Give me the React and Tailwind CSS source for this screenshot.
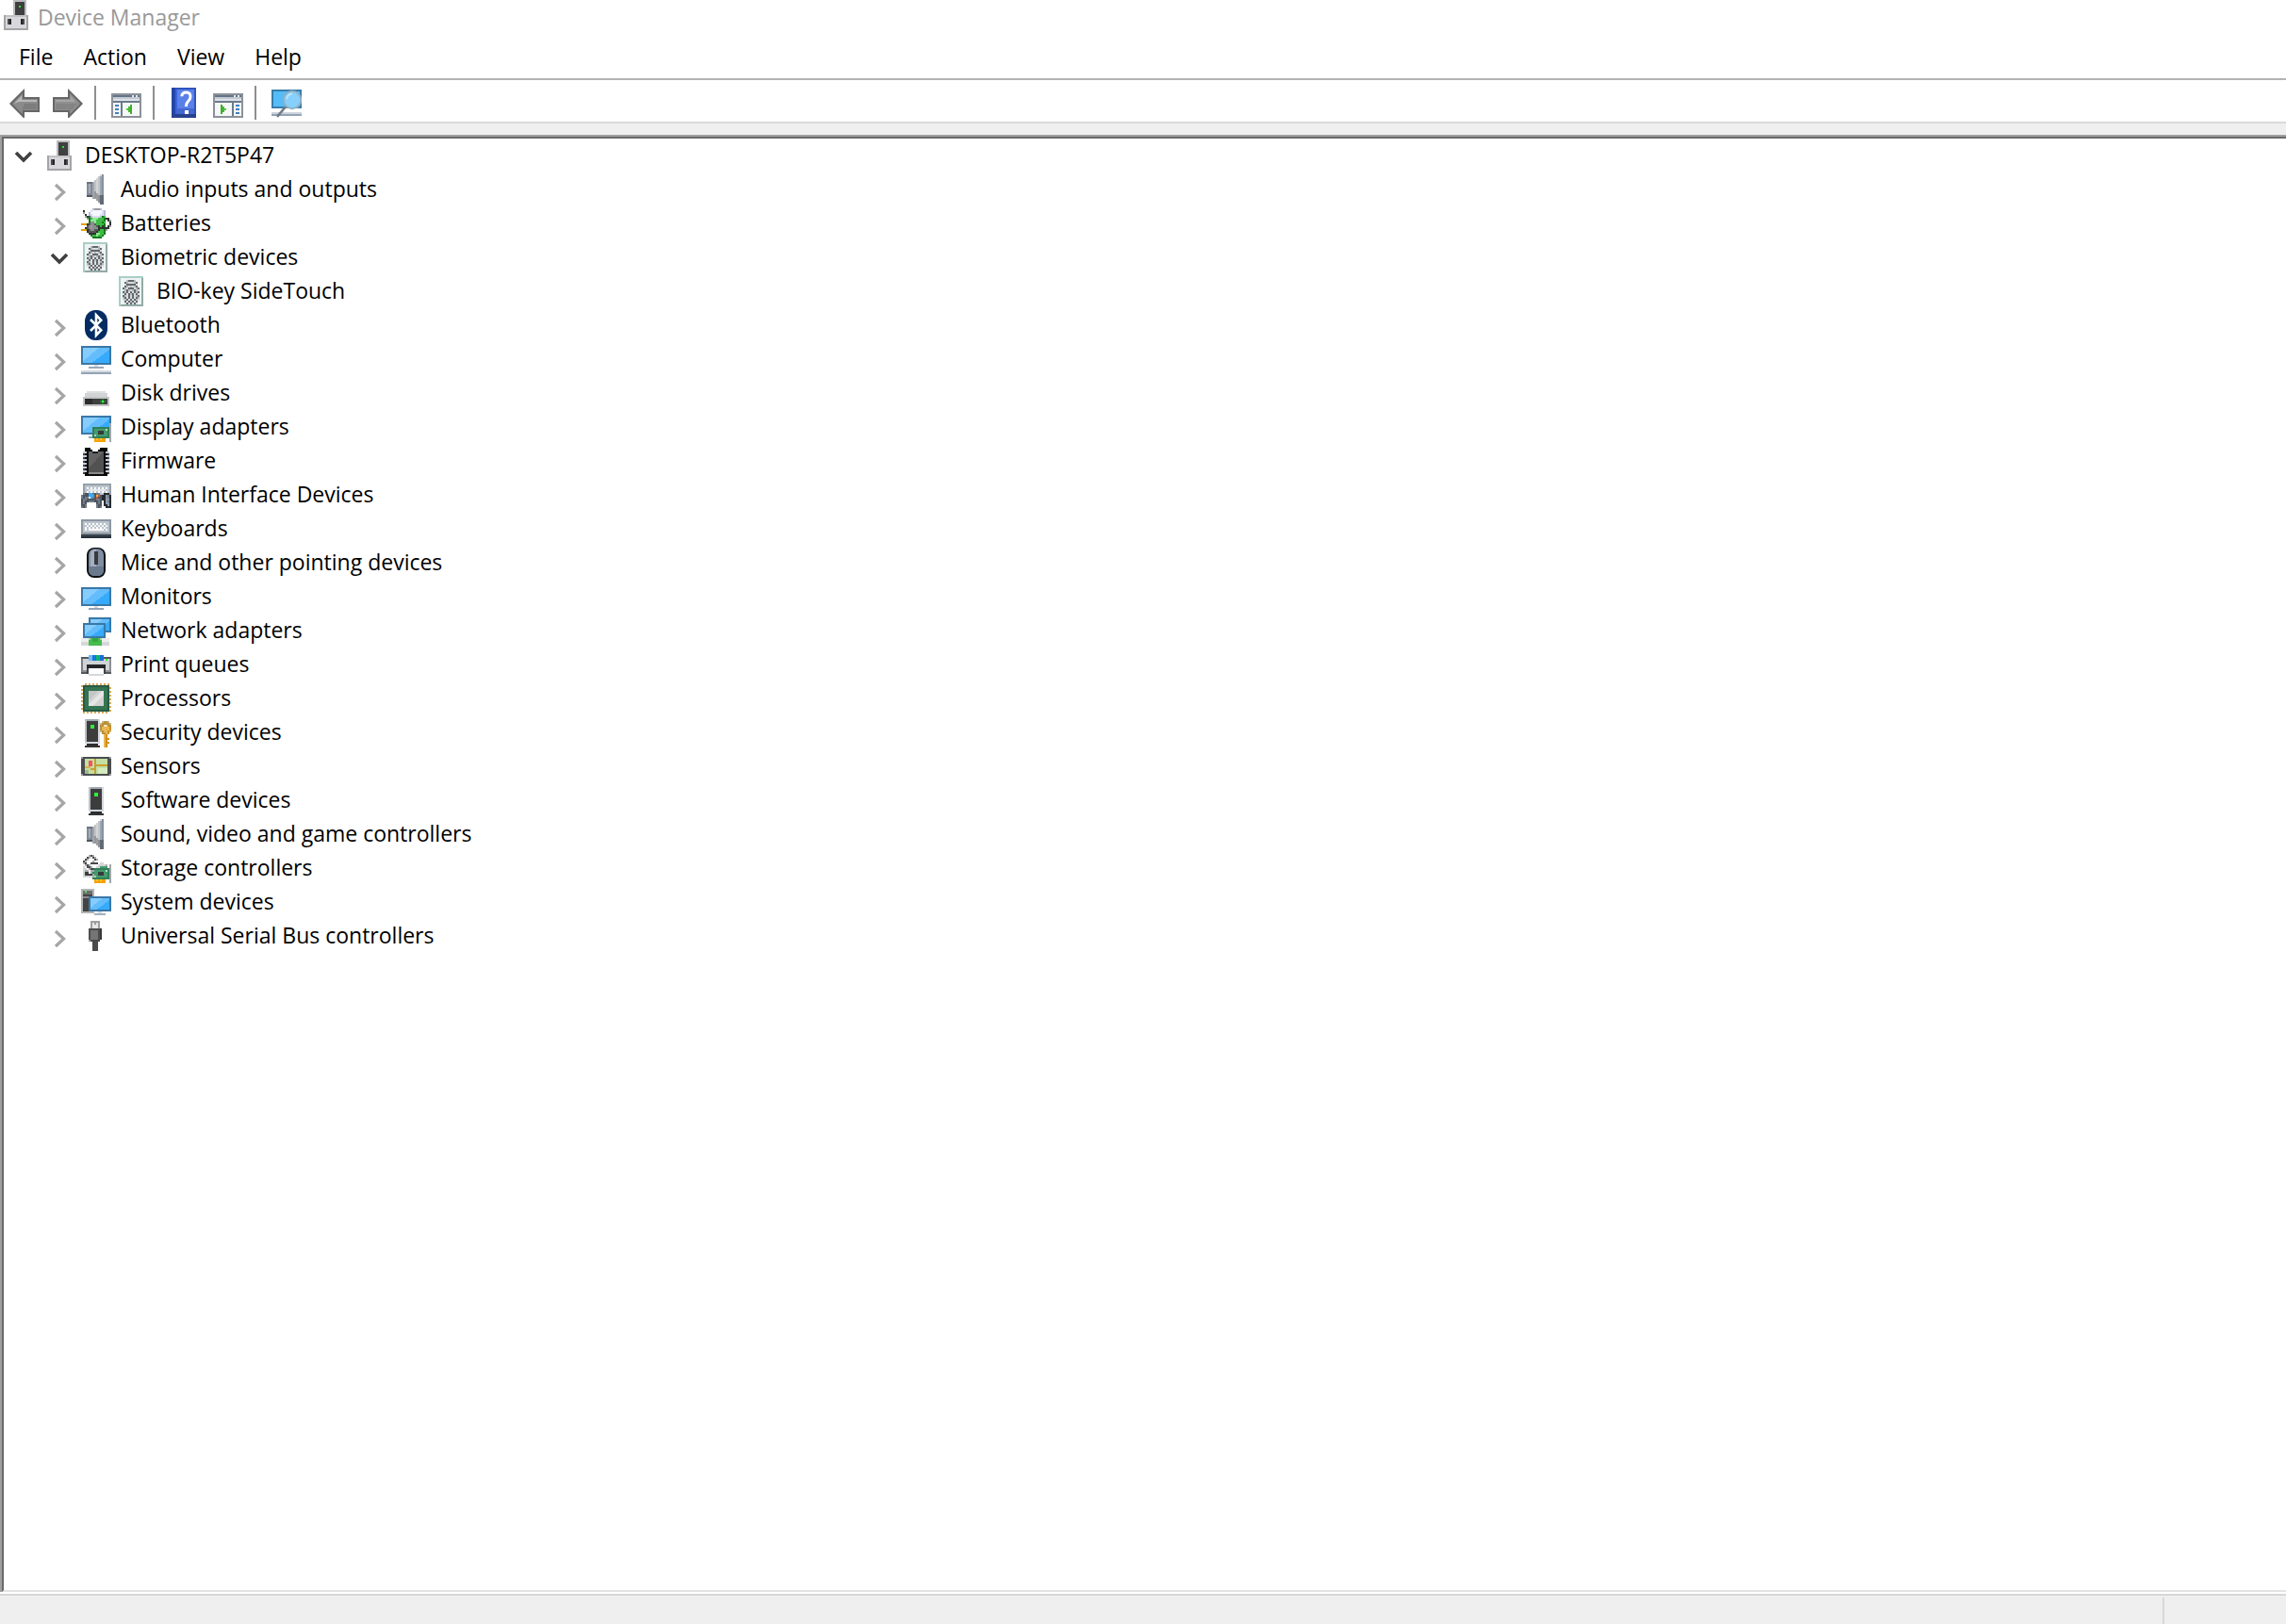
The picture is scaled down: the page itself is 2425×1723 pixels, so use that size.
import React, { useState } from "react";

/* ---------- drawing helpers: every icon lives on a 16 x 16 grid ---------- */

function Icon({ children, label }) {
  return (
    <svg
      viewBox="0 0 16 16"
      shapeRendering="crispEdges"
      className="size-8 shrink-0"
      role={label ? "img" : undefined}
      aria-label={label}
      aria-hidden={label ? undefined : true}
    >
      {children}
    </svg>
  );
}

const R = ({ x, y, w = 1, h = 1, c }) => <rect x={x} y={y} width={w} height={h} fill={c} />;

/* Paints rows of palette letters; neighbouring equal cells become one rect. */
function Pixels({ rows, colors, x = 0, y = 0 }) {
  const out = [];
  rows.forEach((row, j) => {
    let i = 0;
    while (i < row.length) {
      let n = 1;
      while (row[i + n] === row[i]) n++;
      if (colors[row[i]]) out.push(<R key={`${i}-${j}`} x={x + i} y={y + j} w={n} c={colors[row[i]]} />);
      i += n;
    }
  });
  return <>{out}</>;
}

function Screen({ x = 0, y, w = 16, h = 10 }) {
  const r = x + w - 1;
  const b = y + h - 1;
  return (
    <>
      <R x={x} y={y} w={w} h={h} c="#3a78a6" />
      <R x={x + 1} y={y + 1} w={w - 2} h={h - 2} c="#63bdfd" />
      <path d={`M${x + 1} ${y + 1}H${x + w * 0.6}L${x + 1} ${b - 1}Z`} fill="#86cdfd" />
      <path d={`M${r} ${y + 2}V${b}H${x + w * 0.35}Z`} fill="#36abfd" />
    </>
  );
}

function Tower({ x }) {
  return (
    <>
      <R x={x} y={1} w={8} h={13} c="#d3d8de" />
      <R x={x} y={1} w={7} h={1} c="#a3a9b0" />
      <R x={x} y={1} w={1} h={12} c="#bcc1c7" />
      <R x={x + 1} y={2} w={6} h={11} c="#3d3d3d" />
      <R x={x + 3} y={4} w={2} h={2} c="#2df03a" />
      <R x={x + 1} y={14} w={6} h={1} c="#2c2c2c" />
      <R x={x} y={15} w={8} h={1} c="#333333" />
    </>
  );
}

function Card({ y }) {
  return (
    <>
      <R x={15} y={y - 2} w={1} h={10} c="#a3a6aa" />
      <R x={6} y={y} w={9} h={6} c="#2f8058" />
      <R x={7} y={y + 1} w={7} h={4} c="#46996f" />
      <R x={9} y={y + 2} w={3} h={2} c="#333b38" />
      <R x={13} y={y + 1} w={1} h={1} c="#b5dcc6" />
      <R x={7} y={y + 4} w={1} h={1} c="#a5d4b9" />
      <R x={7} y={y + 6} w={6} h={2} c="#f5a300" />
      <R x={8} y={y + 6} w={1} h={1} c="#ffc03a" />
      <R x={10} y={y + 6} w={1} h={1} c="#ffc03a" />
    </>
  );
}

/* ------------------------------- icons ---------------------------------- */

const MachineIcon = () => (
  <Icon>
    <R x={6} y={0} w={7} h={8} c="#b9bcbf" />
    <R x={7} y={1} w={5} h={7} c="#3f3f3f" />
    <R x={9} y={3} c="#2de03a" />
    <R x={1} y={8} w={13} h={8} c="#a5a5a8" />
    <R x={2} y={8} w={11} h={1} c="#c3c3c6" />
    <R x={2} y={9} w={11} h={6} c="#d8d8dc" />
    <R x={3} y={10} w={2} h={3} c="#4a4a4a" />
    <R x={4} y={10} w={1} h={3} c="#262626" />
    <R x={10} y={10} w={2} h={3} c="#4a4a4a" />
    <R x={10} y={10} w={1} h={3} c="#262626" />
  </Icon>
);

const SpeakerIcon = () => (
  <Icon>
    <R x={3} y={4} w={3} h={8} c="#828b97" />
    <R x={3} y={4} w={3} h={1} c="#6b7480" />
    <R x={4} y={5} w={1} h={5} c="#a4acb6" />
    <R x={3} y={11} w={3} h={1} c="#4d5560" />
    <R x={6} y={4} w={1} h={9} c="#a3a6ab" />
    <R x={7} y={3} w={1} h={10} c="#c0c2c5" />
    <R x={8} y={2} w={1} h={12} c="#d3d4d6" />
    <R x={9} y={1} w={1} h={14} c="#c3c5c8" />
    <R x={7} y={9} w={1} h={4} c="#96989c" />
    <R x={8} y={10} w={1} h={4} c="#9c9ea2" />
    <R x={9} y={11} w={1} h={4} c="#8e9196" />
    <R x={10} y={0} w={1} h={16} c="#9ba6b2" />
    <R x={11} y={0} w={1} h={16} c="#8591a0" />
    <R x={10} y={11} w={2} h={5} c="#626a75" />
    <R x={10} y={0} w={1} h={1} c="#d5d9de" />
  </Icon>
);

const BatteryIcon = () => (
  <Icon>
    <Pixels
      colors={{ k: "#2f3330", d: "#555757", m: "#8b8d8d", w: "#f6f6fd", l: "#b9b9dc", L: "#dcdcf2", g: "#3dbb45", b: "#8fe694", G: "#137a1b", y: "#dfa300", n: "#9a9c9c" }}
      rows={[
        "......lnnnl.....",
        ".k...LwwwwwLl...",
        ".n..lwwwwwwLl...",
        "..k.lLwwwwLLl...",
        "..nkGlLLLLlGg...",
        "...nGgbbbgggGkk.",
        "....GbbbggggG.kn",
        "....GmmbgggGg..k",
        "yyykdmmdggggG..k",
        "...dmnmmdkgkG.kn",
        "..kdmnmmmkkkkkk.",
        "yyykdmmddkggGn..",
        "...kddddkgggG...",
        "....kkkkbbggG...",
        ".....GggbggG....",
        "......GGGGG.....",
      ]}
    />
  </Icon>
);

const FingerprintIcon = () => (
  <Icon>
    <R x={1} y={0} w={13} h={16} c="#a9cfc7" />
    <R x={13} y={1} w={1} h={15} c="#93aaa5" />
    <R x={2} y={15} w={12} h={1} c="#93aaa5" />
    <R x={2} y={1} w={11} h={14} c="#f0f3f3" />
    <Pixels
      x={3}
      y={2}
      colors={{ k: "#62696e", n: "#b4babc", l: "#d9dcdd" }}
      rows={[
        "..nkkkn..",
        ".knlllnk.",
        ".lkkkkkl.",
        ".knlnlnk.",
        "knlkkklnk",
        "lnknlnknl",
        "knklklknk",
        "lklknklkl",
        "knlklklnk",
        "nklklklkn",
        "lnklklknl",
        ".klknklk.",
        ".lklklkl.",
      ]}
    />
  </Icon>
);

const BluetoothIcon = () => (
  <Icon>
    <g shapeRendering="auto">
      <rect x="2" y="0" width="12" height="16" rx="5.5" ry="6" fill="#042c63" />
      <path d="M5 5L10.6 10.6L8 13.4V2.6L10.6 5.4L5 11" fill="none" stroke="#ffffff" strokeWidth="1.3" />
    </g>
  </Icon>
);

const ComputerIcon = () => (
  <Icon>
    <Screen y={1} />
    <R x={7} y={11} w={2} c="#d5dae0" />
    <R x={4} y={12} w={8} c="#9aa8ba" />
    <R x={0} y={14} w={16} c="#d3d8df" />
    <R x={0} y={15} w={16} c="#94a3b5" />
  </Icon>
);

const DiskIcon = () => (
  <Icon>
    <R x={3} y={7} w={10} c="#dedfe1" />
    <R x={2} y={8} w={12} h={2} c="#d3d4d6" />
    <R x={1} y={10} w={14} h={5} c="#c3c4c6" />
    <R x={2} y={11} w={12} h={3} c="#3f3f3f" />
    <R x={2} y={11} w={4} h={3} c="#2c2c2c" />
    <R x={10} y={12} w={3} c="#1f7a28" />
    <R x={11} y={11} w={1} h={3} c="#1f7a28" />
    <R x={11} y={12} c="#46f254" />
  </Icon>
);

const DisplayIcon = () => (
  <Icon>
    <Screen y={2} h={10} />
    <R x={4} y={13} w={3} c="#94a3b5" />
    <Card y={8} />
  </Icon>
);

const FirmwareIcon = () => (
  <Icon>
    <R x={2} y={1} w={12} h={15} c="#0a0a0a" />
    <R x={4} y={3} w={8} h={11} c="#525252" />
    <path d="M4 3H12L4 12Z" fill="#636363" />
    <R x={4} y={14} w={8} c="#8a8a8a" />
    <R x={5} y={1} w={5} c="#ffffff" />
    <R x={6} y={2} w={3} c="#ffffff" />
    <R x={5} y={2} c="#0a0a0a" />
    <R x={9} y={2} w={2} c="#0a0a0a" />
    <R x={6} y={3} w={3} c="#1c1c1c" />
    {[3, 5, 7, 9, 11, 13].map((y) => (
      <React.Fragment key={y}>
        <R x={1} y={y} w={2} c="#c5cdd8" />
        <R x={13} y={y} w={2} c="#c5cdd8" />
        <R x={1} y={y + 1} c="#43484f" />
        <R x={14} y={y + 1} c="#43484f" />
      </React.Fragment>
    ))}
  </Icon>
);

const HidIcon = () => (
  <Icon>
    <R x={1} y={2} w={15} h={9} c="#98a1ab" />
    <R x={2} y={3} w={13} h={7} c="#bcc4cd" />
    {[3, 5, 7, 9, 11, 13].map((x) => (
      <React.Fragment key={x}>
        <R x={x} y={4} c="#ffffff" />
        <R x={x} y={6} c="#ffffff" />
      </React.Fragment>
    ))}
    <R x={4} y={5} w={9} c="#e4e8ec" />
    <Pixels
      y={7}
      colors={{ d: "#4d565f", m: "#717c88", b: "#35aefc", r: "#e0503c", o: "#f2b233", k: "#262b31", s: "#8d9aab", w: "#ffffff" }}
      rows={[
        ".mddbbmdmm..kkk.",
        "mdddbbbdordkksmk",
        "mdmmwbmdrddkksmk",
        "dmmdddddmmdkkssk",
        "dmddmmmddmdwksmk",
        "dmdwwwwwdmdwkssk",
        "ddmwwwwwmddwkksk",
        "mdmwwwwwmdmwwkkk",
      ]}
    />
  </Icon>
);

const KeyboardIcon = () => (
  <Icon>
    <R x={0} y={3} w={16} h={8} c="#8d97a2" />
    <R x={1} y={4} w={14} h={6} c="#bbc3cb" />
    {[2, 4, 6, 8, 10, 12].map((x) => (
      <React.Fragment key={x}>
        <R x={x} y={5} c="#ffffff" />
        <R x={x + 1} y={6} c="#f2f4f6" />
        <R x={x} y={7} c="#ffffff" />
      </React.Fragment>
    ))}
    <R x={2} y={8} c="#ffffff" />
    <R x={4} y={8} w={8} c="#f7f8f9" />
    <R x={13} y={8} c="#ffffff" />
    <R x={0} y={11} w={16} h={2} c="#27313b" />
    <R x={0} y={11} w={16} h={1} c="#37424d" />
  </Icon>
);

const MouseIcon = () => (
  <Icon>
    <g shapeRendering="auto">
      <rect x="3" y="0" width="10" height="16" rx="4" fill="#0d0f12" />
      <rect x="4" y="0.6" width="8" height="14.4" rx="3.2" fill="#7f8ea2" />
      <path d="M5 3Q5 1 8 1V14Q5 14 5 11Z" fill="#a3b0c1" />
      <path d="M4 10H12V12Q12 15 8 15Q4 15 4 12Z" fill="#6b798c" />
    </g>
    <R x={7} y={2} w={2} h={7} c="#3a3a3c" />
  </Icon>
);

const MonitorIcon = () => (
  <Icon>
    <Screen y={3} />
    <R x={7} y={13} w={2} c="#d5dae0" />
    <R x={4} y={14} w={8} c="#94a3b5" />
  </Icon>
);

const NetworkIcon = () => (
  <Icon>
    <Screen x={4} y={1} w={12} h={8} />
    <Screen x={1} y={4} w={12} h={8} />
    <R x={0} y={12} w={15} h={4} c="#d6d7d8" />
    <R x={0} y={13} w={15} h={1} c="#eeeeee" />
    <R x={0} y={12} w={15} h={1} c="#ececec" />
    <R x={4} y={12} w={7} h={4} c="#46bc4e" />
    <R x={4} y={12} w={1} h={1} c="#a8d8ab" />
    <R x={10} y={12} w={1} h={1} c="#a8d8ab" />
    <R x={6} y={12} w={3} h={2} c="#35a83e" />
  </Icon>
);

const PrinterIcon = () => (
  <Icon>
    <R x={0} y={4} w={16} h={9} c="#8d9196" />
    <R x={0} y={4} w={4} c="#55585c" />
    <R x={12} y={4} w={4} c="#55585c" />
    <R x={1} y={5} w={14} h={6} c="#d0d3d6" />
    <R x={0} y={5} w={1} h={7} c="#7b7f85" />
    <R x={4} y={3} w={2} h={3} c="#72b8f5" />
    <R x={6} y={3} w={2} h={3} c="#1478dc" />
    <R x={8} y={3} w={2} h={3} c="#10b46c" />
    <R x={10} y={3} w={2} h={3} c="#1a6fd8" />
    <R x={13} y={5} c="#2cf02c" />
    <R x={3} y={8} w={10} h={2} c="#25282b" />
    <R x={3} y={10} w={10} h={3} c="#3f4347" />
    <R x={0} y={12} w={3} c="#55585c" />
    <R x={13} y={12} w={3} c="#55585c" />
    <R x={4} y={10} w={8} h={4} c="#ffffff" />
    <R x={4} y={13} w={8} c="#d6d8da" />
  </Icon>
);

const ProcessorIcon = () => (
  <Icon>
    {[0, 2, 4, 6, 8, 10, 12, 14].map((n) => (
      <React.Fragment key={n}>
        <R x={n} y={0} c={n ? "#d9a95a" : "none"} />
        <R x={n + 1} y={15} c={n < 14 ? "#d9a95a" : "none"} />
        <R x={0} y={n + 1} c={n < 14 ? "#d9a95a" : "none"} />
        <R x={15} y={n} c={n ? "#d9a95a" : "none"} />
      </React.Fragment>
    ))}
    <R x={1} y={1} w={14} h={14} c="#285a41" />
    <R x={2} y={2} w={12} h={12} c="#347452" />
    <R x={4} y={4} w={8} h={8} c="#d3d3d3" />
    <path d="M4 4H9L4 9Z" fill="#c5c5c5" />
    <path d="M11 4H12V6L6 12H4V11Z" fill="#e6e6e6" />
  </Icon>
);

const SecurityIcon = () => (
  <Icon>
    <Tower x={2} />
    <Pixels
      x={10}
      y={2}
      colors={{ n: "#c9b98a", a: "#b8923c", y: "#e8b653", o: "#d08f1c", w: "#f4e3b8" }}
      rows={[".naan.", "naaaan", "aawwaa", "ayyyyo", "ayyyyo", "nayyon", ".aayo.", "..yo..", "..yo..", "..yoo.", "..yo..", "..yoo.", "..yo..", "..yo.."]}
    />
  </Icon>
);

const SensorIcon = () => (
  <Icon>
    <R x={0} y={3} w={16} h={10} c="#4b4d4f" />
    <R x={0} y={3} c="#9a9a9a" />
    <R x={15} y={3} c="#9a9a9a" />
    <R x={0} y={12} c="#9a9a9a" />
    <R x={15} y={12} c="#9a9a9a" />
    <R x={2} y={4} w={12} h={8} c="#c3dfa2" />
    <R x={9} y={9} w={5} h={3} c="#d5ebc0" />
    <R x={2} y={10} w={2} h={2} c="#9fb78c" />
    <R x={7} y={4} w={1} h={8} c="#c89f30" />
    <R x={2} y={8} w={3} c="#d9b354" />
    <R x={5} y={9} w={2} c="#c89f30" />
    <R x={8} y={7} w={6} c="#c89f30" />
    <R x={4} y={5} w={2} h={3} c="#f2555f" />
  </Icon>
);

const SoftwareIcon = () => (
  <Icon>
    <Tower x={4} />
  </Icon>
);

const StorageIcon = () => (
  <Icon>
    <Card y={8} />
    <Pixels
      y={1}
      colors={{ k: "#4a4a4a", d: "#3a3f3d", n: "#a9acaf", l: "#d3d5d7", g: "#4c9a70" }}
      rows={[
        "....nkn.........",
        "...kn.kn........",
        "..kn...kn.......",
        ".kn...n.........",
        ".nk..kkkk.ll....",
        "..nkn....lllln..",
        ".l.kkn..llgggg..",
        ".ll.nkk.........",
        ".lnn.nn.........",
        ".ldd.n..........",
        ".lddddn.........",
        ".llllln.........",
      ]}
    />
  </Icon>
);

const SystemIcon = () => (
  <Icon>
    <R x={0} y={1} w={7} h={13} c="#b4b4b4" />
    <R x={1} y={2} w={5} h={11} c="#444444" />
    <R x={1} y={2} w={5} h={2} c="#6d6d6d" />
    <R x={1} y={5} w={5} h={1} c="#8b8b8b" />
    <R x={2} y={2} c="#3df24a" />
    <Screen x={4} y={5} w={12} h={8} />
    <R x={9} y={13} w={2} c="#d5dae0" />
    <R x={7} y={14} w={6} c="#a3b0c1" />
  </Icon>
);

const UsbIcon = () => (
  <Icon>
    <R x={5} y={0} w={5} h={4} c="#a0a0a0" />
    <R x={6} y={1} w={3} h={3} c="#e6e6e6" />
    <R x={7} y={1} w={1} h={1} c="#9a9a9a" />
    <R x={4} y={4} w={7} h={6} c="#4d4d4d" />
    <R x={5} y={5} w={4} h={5} c="#757575" />
    <R x={4} y={10} c="#a0a0a0" />
    <R x={5} y={10} w={5} h={1} c="#484848" />
    <R x={10} y={4} w={1} h={6} c="#383838" />
    <R x={6} y={11} w={3} h={5} c="#4b4b4b" />
  </Icon>
);

const BackIcon = () => (
  <Icon>
    <g shapeRendering="auto">
      <path d="M0.7 8.5L7.5 1.7V5.5H15.5V12.5H7.5V15.4Z" fill="#8b8b8b" stroke="#666666" />
      <path d="M2.4 8.5L6.6 4.3V6.5H14.5V7.5H5Z" fill="#b9b9b9" />
      <path d="M8 8.5H14.5V11.5H6.5V12.4Z" fill="#777777" opacity="0.7" />
    </g>
  </Icon>
);

const ForwardIcon = () => (
  <Icon>
    <g shapeRendering="auto">
      <path d="M15.3 8.5L8.5 1.7V5.5H0.5V12.5H8.5V15.4Z" fill="#8f8f8f" stroke="#666666" />
      <path d="M1.5 6.5H9.4V4.3L12 7.5H1.5Z" fill="#a5a5a5" />
      <path d="M1.5 8.5H13L9.4 12.5V11.5H1.5Z" fill="#7f7f7f" opacity="0.7" />
    </g>
  </Icon>
);

const WindowFrame = () => (
  <>
    <R x={0} y={3} w={16} h={13} c="#8d9299" />
    <R x={1} y={4} w={14} h={1} c="#657488" />
    <R x={1} y={5} w={14} h={3} c="#dfe3e8" />
    <R x={1} y={5} w={14} h={1} c="#c3cad3" />
    <R x={1} y={7} w={14} h={1} c="#6c7a8d" />
    <R x={11} y={4} c="#e6eaef" />
    <R x={13} y={4} c="#e6eaef" />
    <R x={1} y={8} w={14} h={7} c="#f6f7f7" />
  </>
);

const ConsoleTreeIcon = () => (
  <Icon>
    <WindowFrame />
    {[9, 11, 13].map((y) => (
      <R key={y} x={2} y={y} w={2} c="#4180c2" />
    ))}
    <R x={5} y={8} w={1} h={7} c="#6c7a8d" />
    <R x={8} y={11} c="#5bc94a" />
    <R x={9} y={10} h={3} c="#48b838" />
    <R x={10} y={9} h={5} c="#3fae2e" />
  </Icon>
);

const ActionPaneIcon = () => (
  <Icon>
    <WindowFrame />
    {[9, 11, 13].map((y) => (
      <R key={y} x={12} y={y} w={2} c="#4180c2" />
    ))}
    <R x={10} y={8} w={1} h={7} c="#6c7a8d" />
    <R x={4} y={9} h={5} c="#3fae2e" />
    <R x={5} y={10} h={3} c="#48b838" />
    <R x={6} y={11} c="#5bc94a" />
  </Icon>
);

const HelpIcon = () => (
  <Icon>
    <R x={1} y={0} w={13} h={16} c="#2f54bd" />
    <R x={1} y={0} w={2} h={16} c="#2346a8" />
    <R x={3} y={1} w={1} h={14} c="#3c63d6" />
    <R x={4} y={1} w={9} h={13} c="#5a80ea" />
    <R x={4} y={11} w={9} h={3} c="#4468cf" />
    <R x={1} y={14} w={13} h={2} c="#28428f" />
    <g shapeRendering="auto">
      <path d="M6.4 4.6Q6.5 2.5 8.8 2.5Q11 2.5 11 4.8Q11 6.2 9.8 7.2Q8.7 8.2 8.7 10" fill="none" stroke="#ffffff" strokeWidth="1.5" />
    </g>
    <R x={8} y={12} w={2} h={2} c="#ffffff" />
  </Icon>
);

const ScanIcon = () => (
  <Icon>
    <R x={0} y={1} w={16} h={10} c="#3a7ca8" />
    <R x={1} y={2} w={14} h={8} c="#55bcf8" />
    <R x={0} y={13} w={16} c="#cdd3db" />
    <R x={0} y={14} w={16} c="#94a3b5" />
    <g shapeRendering="auto">
      <path d="M7.6 10L3 15.4" stroke="#6f7c86" strokeWidth="1.3" />
      <circle cx="11" cy="6.5" r="4.6" fill="#86d0fb" stroke="#8fb1c6" strokeWidth="1" />
      <path d="M8 6Q8.5 3.4 11 3.2" fill="none" stroke="#b9e4fd" />
    </g>
  </Icon>
);

function Chevron({ open }) {
  return (
    <svg viewBox="0 0 16 16" className="size-8 shrink-0" fill="none" aria-hidden="true">
      {open ? (
        <path d="M3.5 6.5L7.5 10.5L11.5 6.5" stroke="#404040" strokeWidth="1.8" />
      ) : (
        <path d="M5.5 5.5L9.8 9.5L5.5 13.5" stroke="#a6a6a6" strokeWidth="1.6" />
      )}
    </svg>
  );
}

/* ------------------------------- content -------------------------------- */

const CATEGORIES = [
  { name: "Audio inputs and outputs", icon: SpeakerIcon },
  { name: "Batteries", icon: BatteryIcon },
  { name: "Biometric devices", icon: FingerprintIcon, open: true, items: [{ name: "BIO-key SideTouch", icon: FingerprintIcon, leaf: true }] },
  { name: "Bluetooth", icon: BluetoothIcon },
  { name: "Computer", icon: ComputerIcon },
  { name: "Disk drives", icon: DiskIcon },
  { name: "Display adapters", icon: DisplayIcon },
  { name: "Firmware", icon: FirmwareIcon },
  { name: "Human Interface Devices", icon: HidIcon },
  { name: "Keyboards", icon: KeyboardIcon },
  { name: "Mice and other pointing devices", icon: MouseIcon },
  { name: "Monitors", icon: MonitorIcon },
  { name: "Network adapters", icon: NetworkIcon },
  { name: "Print queues", icon: PrinterIcon },
  { name: "Processors", icon: ProcessorIcon },
  { name: "Security devices", icon: SecurityIcon },
  { name: "Sensors", icon: SensorIcon },
  { name: "Software devices", icon: SoftwareIcon },
  { name: "Sound, video and game controllers", icon: SpeakerIcon },
  { name: "Storage controllers", icon: StorageIcon },
  { name: "System devices", icon: SystemIcon },
  { name: "Universal Serial Bus controllers", icon: UsbIcon },
];

const ROOT = { name: "DESKTOP-R2T5P47", icon: MachineIcon, open: true, items: CATEGORIES };

function TreeNode({ node }) {
  const [open, setOpen] = useState(Boolean(node.open));
  const Glyph = node.icon;
  return (
    <li role="treeitem" aria-expanded={node.leaf ? undefined : open}>
      <div className="flex h-9 items-center">
        {node.leaf ? (
          <span className="w-[38px]" />
        ) : (
          <button type="button" className="w-[38px]" aria-label={`Toggle ${node.name}`} onClick={() => setOpen(!open)}>
            <Chevron open={open} />
          </button>
        )}
        <Glyph />
        <span className="pb-0.5 pl-2.5 whitespace-nowrap">{node.name}</span>
      </div>
      {open && node.items && (
        <ul role="group" className="pl-[38px]">
          {node.items.map((item) => (
            <TreeNode key={item.name} node={item} />
          ))}
        </ul>
      )}
    </li>
  );
}

const Divider = () => <span className="mr-4 ml-3 h-9 w-0.5 bg-[#8f8f8f]" />;

function ToolButton({ label, children }) {
  return (
    <button type="button" aria-label={label} title={label}>
      {children}
    </button>
  );
}

export default function App() {
  return (
    <div className="flex min-h-screen flex-col bg-white font-['Open_Sans',sans-serif] text-[23px] leading-8 text-black">
      <header className="flex h-9 items-start gap-1.5 pl-0.5">
        <MachineIcon />
        <h1 className="pt-0.5 text-[#999999]">Device Manager</h1>
      </header>

      <nav aria-label="Menu" className="flex h-[47px] items-center gap-8 pl-5">
        {["File", "Action", "View", "Help"].map((name) => (
          <button key={name} type="button">
            {name}
          </button>
        ))}
      </nav>

      <div role="toolbar" aria-label="Tools" className="flex h-12 items-center border-y-2 border-t-[#b3b3b3] border-b-[#dadada] pt-1 pl-2.5">
        <ToolButton label="Back"><BackIcon /></ToolButton>
        <span className="w-3.5" />
        <ToolButton label="Forward"><ForwardIcon /></ToolButton>
        <Divider />
        <ToolButton label="Show or hide console tree"><ConsoleTreeIcon /></ToolButton>
        <Divider />
        <ToolButton label="Help"><HelpIcon /></ToolButton>
        <span className="w-3.5" />
        <ToolButton label="Show or hide action pane"><ActionPaneIcon /></ToolButton>
        <Divider />
        <ToolButton label="Scan for hardware changes"><ScanIcon /></ToolButton>
      </div>

      <div className="h-3 bg-[#efefef]" />

      <main className="flex flex-1 border-t-2 border-l-2 border-[#a0a0a0]">
        <div className="flex-1 border-t-2 border-b-2 border-l-2 border-t-[#696969] border-b-[#e3e3e3] border-l-[#696969] pl-1.5">
          <ul role="tree" aria-label="Devices">
            <TreeNode node={ROOT} />
          </ul>
        </div>
      </main>

      <footer className="mt-0.5 flex h-8 justify-end border-t-2 border-[#d7d7d7] bg-[#efefef] pt-0.5">
        <div className="w-[131px] border-l-2 border-[#d7d7d7]" />
      </footer>
    </div>
  );
}
